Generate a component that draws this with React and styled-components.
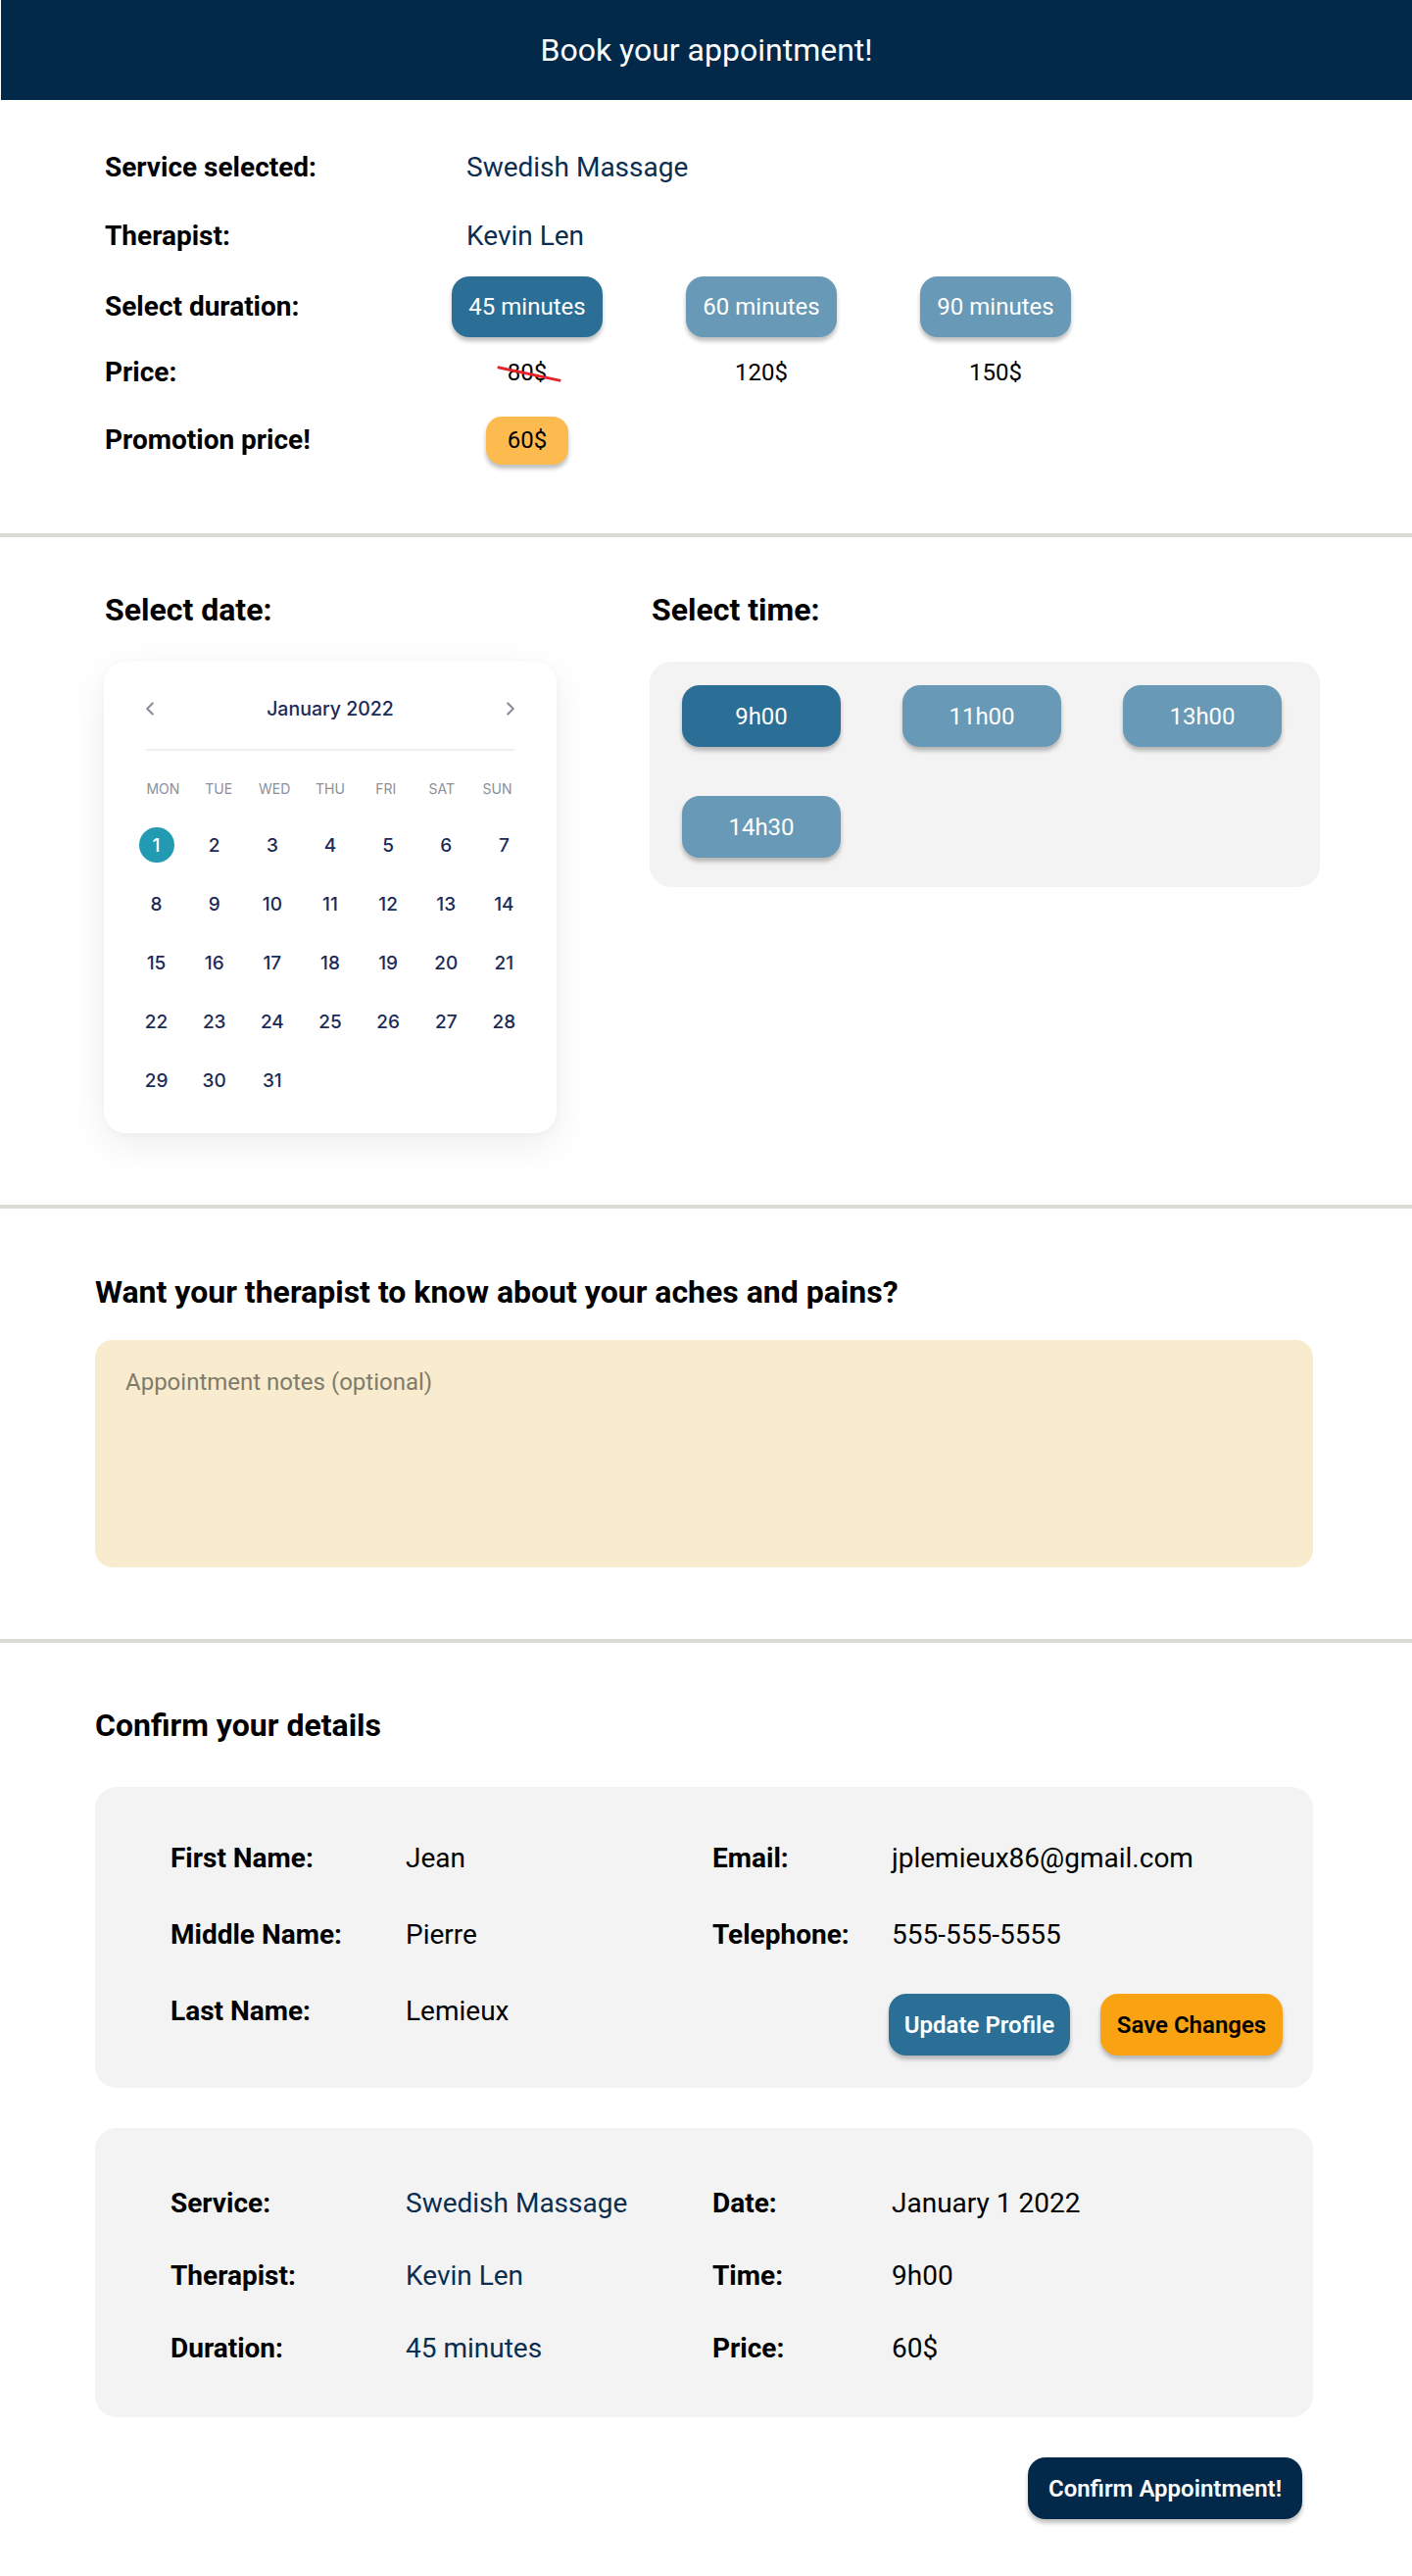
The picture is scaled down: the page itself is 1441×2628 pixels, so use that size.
import React from "react";
import styled, { createGlobalStyle } from "styled-components";
import { ChevronLeft, ChevronRight } from "lucide-react";

const GlobalStyle = createGlobalStyle`
  html, body { margin: 0; padding: 0; background: #ffffff; }
  body { font-family: Roboto, "Liberation Sans", Arial, sans-serif; color: #000; }
  * { box-sizing: border-box; }
`;

const NAVY = "#03294a";
const VALUE = "#0b2e50";
const BLUE = "#2b6f97";
const LIGHTBLUE = "#6899b6";

const Page = styled.div`
  width: 1441px;
  min-height: 2628px;
  background: #fff;
`;

const Header = styled.header`
  height: 102px;
  background: ${NAVY};
  display: flex;
  align-items: center;
  justify-content: center;
  margin-left: 1px;
`;

const Title = styled.h1`
  margin: 0;
  color: #fff;
  font-weight: 400;
  font-size: 32px;
`;

const Section = styled.section`
  border-bottom: ${(p) => (p.$divider ? "4px solid #dadbd7" : "none")};
  padding: ${(p) => p.$pad};
`;

const ServiceGrid = styled.div`
  display: grid;
  grid-template-columns: 269px 154px 154px 154px;
  column-gap: 85px;
  grid-template-rows: 70px 70px 74px 60px 78px;
  align-items: center;
`;

const Label = styled.div`
  font-weight: 700;
  font-size: 28px;
  line-height: 1.2;
  white-space: nowrap;
`;

const Value = styled.div`
  font-size: 28px;
  line-height: 1.2;
  color: ${(p) => (p.$dark ? "#000" : VALUE)};
  padding-left: ${(p) => p.$indent || "0"};
  white-space: nowrap;
`;

const Pill = styled.button`
  border: none;
  height: ${(p) => p.$h || "62px"};
  width: ${(p) => p.$w || "154px"};
  border-radius: 18px;
  background: ${(p) => (p.$active ? BLUE : LIGHTBLUE)};
  color: #fff;
  font-family: Roboto, "Liberation Sans", sans-serif;
  font-size: 24px;
  font-weight: 400;
  box-shadow: 0 4px 4px rgba(0, 0, 0, 0.25);
  padding: 0;
  cursor: pointer;
`;

const PriceCell = styled.div`
  justify-self: center;
  font-size: 24px;
  position: relative;
  ${(p) =>
    p.$struck &&
    `
    &::after {
      content: "";
      position: absolute;
      left: -11px;
      top: 50%;
      width: 66px;
      height: 3px;
      background: #e3242b;
      transform: rotate(12deg);
      transform-origin: center;
    }
  `}
`;

const PromoBadge = styled.div`
  justify-self: center;
  width: 84px;
  height: 49px;
  border-radius: 16px;
  background: #fdbb4f;
  display: flex;
  align-items: center;
  justify-content: center;
  font-size: 24px;
  box-shadow: 0 4px 4px rgba(0, 0, 0, 0.25);
`;

const DateTimeRow = styled.div`
  display: flex;
  gap: 95px;
  align-items: flex-start;
`;

const Column = styled.div`
  display: flex;
  flex-direction: column;
`;

const Heading = styled.h2`
  margin: 0 0 ${(p) => p.$mb || "34px"} ${(p) => p.$ml || "0"};
  font-size: 32px;
  font-weight: 700;
  line-height: 38px;
  white-space: nowrap;
`;

const CalendarCard = styled.div`
  width: 462px;
  height: 481px;
  border-radius: 22px;
  background: #fff;
  box-shadow: 0 12px 40px rgba(0, 0, 0, 0.07), 0 2px 10px rgba(0, 0, 0, 0.03);
  padding: 28px 24px 24px;
  font-family: Inter, "Noto Sans", sans-serif;
`;

const CalHeader = styled.div`
  margin: 0 12px;
  height: 40px;
  display: flex;
  align-items: center;
  justify-content: space-between;
  color: #8a8f9c;
`;

const MonthTitle = styled.div`
  font-size: 19.5px;
  font-weight: 500;
  color: #1b2a57;
`;

const CalDivider = styled.div`
  margin: 21px 19px 0;
  height: 2px;
  background: #eeeff1;
`;

const WeekRow = styled.div`
  margin: 31px 8px 0;
  display: grid;
  grid-template-columns: repeat(7, 1fr);
  justify-items: center;
  font-size: 14px;
  line-height: 16px;
  color: #8a8f9c;
`;

const DaysGrid = styled.div`
  margin-top: 19px;
  display: grid;
  grid-template-columns: repeat(7, 1fr);
  grid-auto-rows: 60px;
  align-items: center;
  justify-items: center;
`;

const Day = styled.div`
  width: 36px;
  height: 36px;
  border-radius: 50%;
  display: flex;
  align-items: center;
  justify-content: center;
  font-size: 19px;
  font-weight: 500;
  color: ${(p) => (p.$selected ? "#fff" : "#1b2a57")};
  background: ${(p) => (p.$selected ? "#219ab2" : "transparent")};
`;

const TimePanel = styled.div`
  width: 684px;
  background: #f3f3f3;
  border-radius: 22px;
  padding: 24px 39px 30px 33px;
  display: grid;
  grid-template-columns: repeat(3, 162px);
  column-gap: 63px;
  row-gap: 50px;
`;

const NotesArea = styled.textarea`
  display: block;
  width: 1243px;
  height: 232px;
  border: none;
  border-radius: 18px;
  background: #f9ecce;
  resize: none;
  padding: 29px 31px;
  font-family: Roboto, "Liberation Sans", sans-serif;
  font-size: 24px;
  color: #333;
  outline: none;
  &::placeholder {
    color: #7f7b6c;
  }
`;

const DetailsCard = styled.div`
  width: 1243px;
  background: #f3f3f3;
  border-radius: 22px;
  padding: ${(p) => p.$pad};
  display: grid;
  grid-template-columns: 240px 313px 183px 1fr;
  grid-auto-rows: ${(p) => p.$row};
  align-items: center;
  margin-top: ${(p) => p.$mt || "0"};
`;

const ButtonGroup = styled.div`
  display: flex;
  gap: 31px;
  margin-left: -3px;
  align-self: start;
  margin-top: 21px;
`;

const ActionButton = styled.button`
  height: 63px;
  width: ${(p) => p.$w};
  border: none;
  border-radius: 18px;
  background: ${(p) => p.$bg};
  color: ${(p) => p.$fg};
  font-family: Roboto, "Liberation Sans", sans-serif;
  font-weight: 600;
  font-size: 24px;
  box-shadow: 0 4px 4px rgba(0, 0, 0, 0.25);
  padding: 0;
  cursor: pointer;
  white-space: nowrap;
`;

const Footer = styled.div`
  display: flex;
  justify-content: flex-end;
  margin-top: 41px;
  padding-right: 11px;
`;

const durations = [
  { label: "45 minutes", price: "80$", active: true, struck: true },
  { label: "60 minutes", price: "120$" },
  { label: "90 minutes", price: "150$" },
];

const times = ["9h00", "11h00", "13h00", "14h30"];
const weekdays = ["MON", "TUE", "WED", "THU", "FRI", "SAT", "SUN"];
const days = Array.from({ length: 31 }, (_, i) => i + 1);

export default function App() {
  return (
    <Page>
      <GlobalStyle />
      <Header>
        <Title>Book your appointment!</Title>
      </Header>

      <Section $divider $pad="34px 0 56px 107px">
        <ServiceGrid>
          <Label>Service selected:</Label>
          <Value $indent="15px" style={{ gridColumn: "2 / 5" }}>Swedish Massage</Value>

          <Label>Therapist:</Label>
          <Value $indent="15px" style={{ gridColumn: "2 / 5" }}>Kevin Len</Value>

          <Label>Select duration:</Label>
          {durations.map((d) => (
            <Pill key={d.label} $active={d.active}>{d.label}</Pill>
          ))}

          <Label>Price:</Label>
          {durations.map((d) => (
            <PriceCell key={d.price} $struck={d.struck}>{d.price}</PriceCell>
          ))}

          <Label>Promotion price!</Label>
          <PromoBadge>60$</PromoBadge>
        </ServiceGrid>
      </Section>

      <Section $divider $pad="55px 0 73px 106px">
        <DateTimeRow>
          <Column>
            <Heading $ml="1px">Select date:</Heading>
            <CalendarCard>
              <CalHeader>
                <ChevronLeft size={22} strokeWidth={2.4} />
                <MonthTitle>January 2022</MonthTitle>
                <ChevronRight size={22} strokeWidth={2.4} />
              </CalHeader>
              <CalDivider />
              <WeekRow>
                {weekdays.map((w) => (
                  <span key={w}>{w}</span>
                ))}
              </WeekRow>
              <DaysGrid>
                {days.map((d) => (
                  <Day key={d} $selected={d === 1}>{d}</Day>
                ))}
              </DaysGrid>
            </CalendarCard>
          </Column>
          <Column>
            <Heading $ml="2px">Select time:</Heading>
            <TimePanel>
              {times.map((t, i) => (
                <Pill key={t} $active={i === 0} $w="162px" $h="63px">{t}</Pill>
              ))}
            </TimePanel>
          </Column>
        </DateTimeRow>
      </Section>

      <Section $divider $pad="66px 0 73px 97px">
        <Heading $mb="30px">Want your therapist to know about your aches and pains?</Heading>
        <NotesArea placeholder="Appointment notes (optional)" />
      </Section>

      <Section $pad="65px 101px 57px 97px">
        <Heading $mb="44px">Confirm your details</Heading>
        <DetailsCard $pad="34px 31px 39px 77px" $row="78px">
          <Label>First Name:</Label>
          <Value $dark>Jean</Value>
          <Label>Email:</Label>
          <Value $dark>jplemieux86@gmail.com</Value>

          <Label>Middle Name:</Label>
          <Value $dark>Pierre</Value>
          <Label>Telephone:</Label>
          <Value $dark>555-555-5555</Value>

          <Label>Last Name:</Label>
          <Value $dark>Lemieux</Value>
          <div />
          <ButtonGroup>
            <ActionButton $w="185px" $bg={BLUE} $fg="#fff">Update Profile</ActionButton>
            <ActionButton $w="186px" $bg="#f9a313" $fg="#000">Save Changes</ActionButton>
          </ButtonGroup>
        </DetailsCard>

        <DetailsCard $pad="40px 31px 33px 77px" $row="74px" $mt="41px">
          <Label>Service:</Label>
          <Value>Swedish Massage</Value>
          <Label>Date:</Label>
          <Value $dark>January 1 2022</Value>

          <Label>Therapist:</Label>
          <Value>Kevin Len</Value>
          <Label>Time:</Label>
          <Value $dark>9h00</Value>

          <Label>Duration:</Label>
          <Value>45 minutes</Value>
          <Label>Price:</Label>
          <Value $dark>60$</Value>
        </DetailsCard>

        <Footer>
          <ActionButton $w="280px" $bg={NAVY} $fg="#fff">Confirm Appointment!</ActionButton>
        </Footer>
      </Section>
    </Page>
  );
}
